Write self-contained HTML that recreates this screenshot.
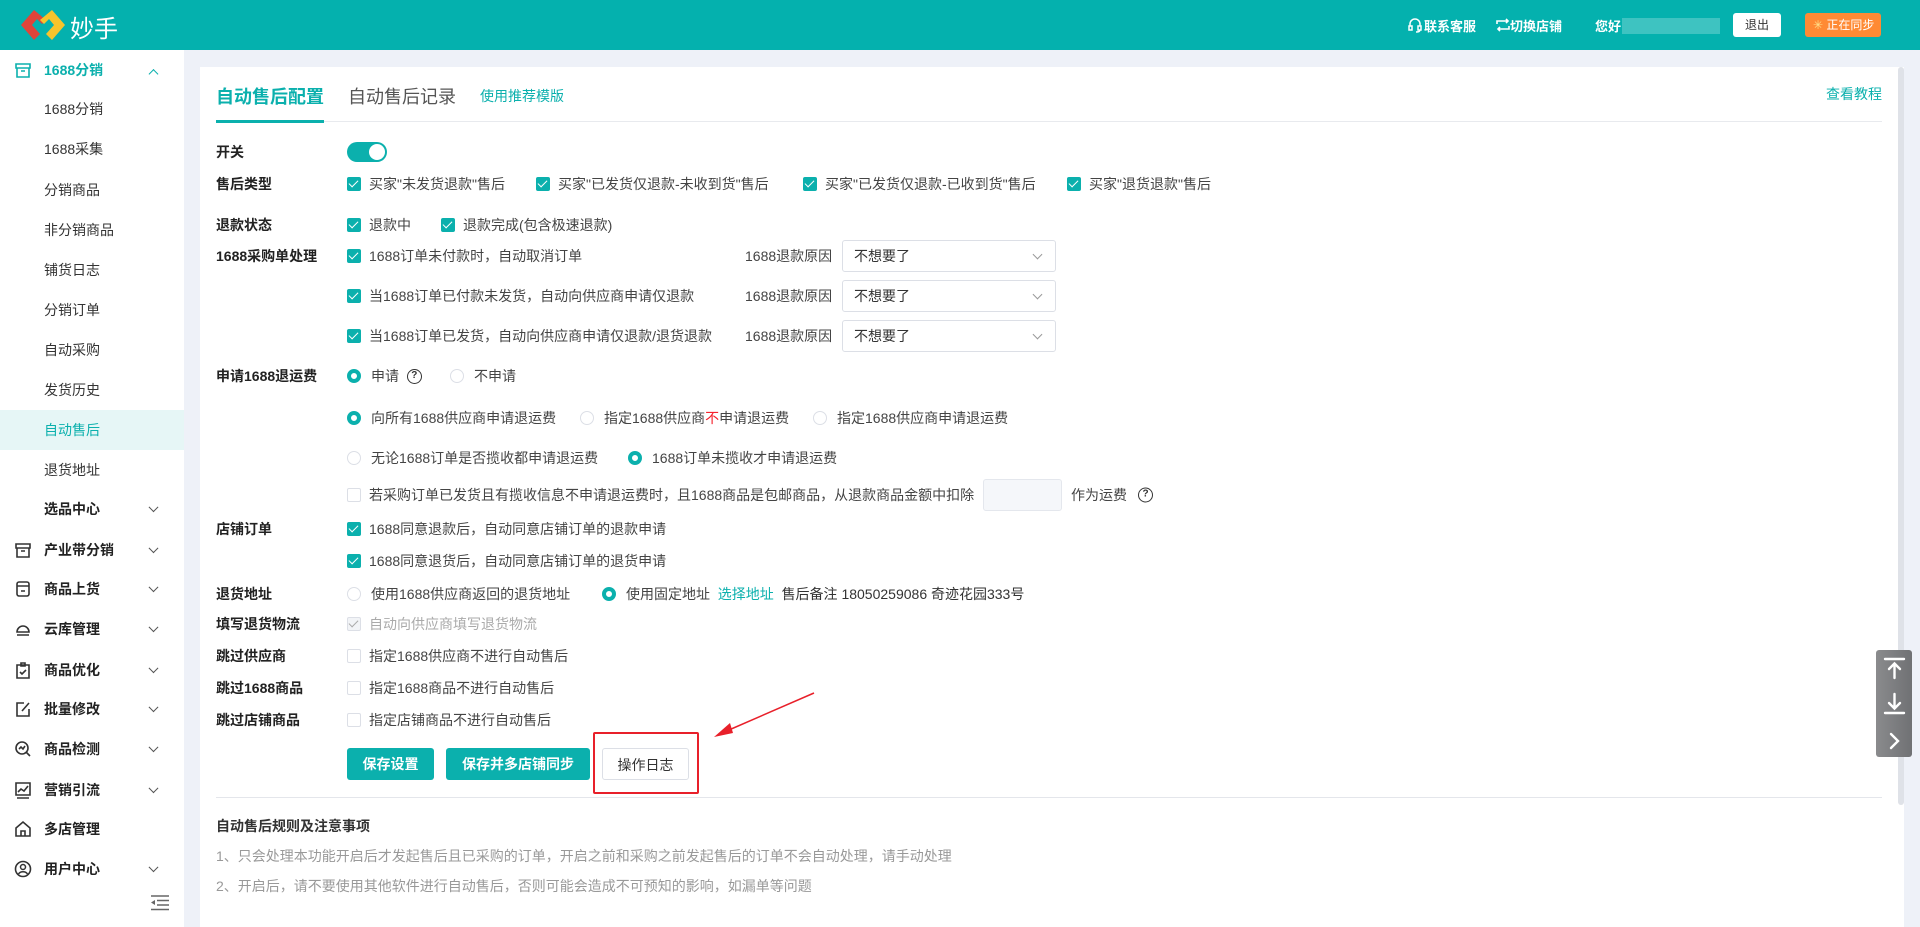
<!DOCTYPE html>
<html><head><meta charset="utf-8"><style>
*{margin:0;padding:0;box-sizing:border-box}
body{width:1920px;height:927px;overflow:hidden;background:#eef1f8;font-family:"Liberation Sans","Noto Sans CJK SC",sans-serif;font-size:14px;color:#333;position:relative}
.a{position:absolute;white-space:nowrap}
.hdr{position:absolute;left:0;top:0;width:1920px;height:50px;background:#04b1ae}
.side{position:absolute;left:0;top:50px;width:184px;height:877px;background:#fff}
.si{position:absolute;left:44px;font-size:14px;color:#333;transform:translateY(-50%)}
.sg{position:absolute;left:44px;font-size:14px;color:#222;font-weight:bold;transform:translateY(-50%)}
.ic{position:absolute;left:14px;width:18px;height:18px;transform:translateY(-50%)}
.chev{position:absolute;left:150px;width:7px;height:7px;border-right:1.5px solid #555;border-bottom:1.5px solid #555;transform:translateY(-75%) rotate(45deg)}
.card{position:absolute;left:200px;top:67px;width:1704px;height:860px;background:#fff}
.lbl{position:absolute;left:216px;font-weight:bold;color:#222;transform:translateY(-50%);white-space:nowrap}
.it{position:absolute;transform:translateY(-50%);white-space:nowrap;display:flex;align-items:center;color:#444}
.cb{width:14px;height:14px;border-radius:2px;background:#0bb0ad;margin-right:8px;position:relative;display:inline-block;flex:none}
.cb:after{content:"";position:absolute;left:4px;top:1px;width:4px;height:8px;border-right:1.5px solid #fff;border-bottom:1.5px solid #fff;transform:rotate(45deg)}
.cb.off{background:#fff;border:1px solid #dcdfe6}
.cb.off:after{display:none}
.cb.dis{background:#f2f4f7;border:1px solid #dcdfe6}
.cb.dis:after{border-color:#aaa;left:3px;top:0}
.rd{width:14px;height:14px;border-radius:50%;border:4px solid #0bb0ad;background:#fff;margin-right:10px;display:inline-block;flex:none}
.rd.off{border:1px solid #dcdfe6}
.sel{position:absolute;left:842px;width:214px;height:32px;border:1px solid #dcdfe6;border-radius:3px;transform:translateY(-50%);padding-left:11px;line-height:30px;color:#333}
.sel:after{content:"";position:absolute;right:14px;top:10px;width:6px;height:6px;border-right:1px solid #999;border-bottom:1px solid #999;transform:rotate(45deg)}
.rs{position:absolute;left:745px;transform:translateY(-50%);color:#444}
.q{display:inline-block;width:15px;height:15px;border:1.5px solid #333;border-radius:50%;font-size:10px;line-height:12px;text-align:center;font-weight:bold;color:#333}
.btn{position:absolute;top:748px;height:32px;line-height:32px;border-radius:3px;text-align:center;font-weight:bold;color:#fff;background:#0bb0ad}
</style></head><body>
<div class="hdr">
 <svg class="a" style="left:18px;top:7px" width="50" height="36" viewBox="0 0 50 36">
  <path d="M16 3 L3 18 L16 33 L22 27 L14 18 L19 12 L24 17 L28 13 Z" fill="#e0443a"/>
  <path d="M34 3 L47 18 L34 33 L28 27 L36 18 L31 12 L26 17 L22 13 Z" fill="#f7c42c"/>
 </svg>
 <div class="a" style="left:70px;top:9px;font-size:24px;color:#fff">妙手</div>
 <svg class="a" style="left:1408px;top:17px" width="14" height="16" viewBox="0 0 14 16"><path d="M2 9 V7 a5 5 0 0 1 10 0 V9 M1 9h3v4H1z M10 9h3v4h-3z M12 13 q0 2 -4 2" stroke="#fff" stroke-width="1.5" fill="none"/></svg>
 <div class="a" style="left:1424px;top:16px;color:#fff;font-weight:bold;font-size:13px">联系客服</div>
 <svg class="a" style="left:1496px;top:18px" width="14" height="14" viewBox="0 0 14 14"><path d="M1 6 V3 H12 M10 1 L12 3 L10 5 M13 8 V11 H2 M4 13 L2 11 L4 9" stroke="#fff" stroke-width="1.6" fill="none"/></svg>
 <div class="a" style="left:1510px;top:16px;color:#fff;font-weight:bold;font-size:13px">切换店铺</div>
 <div class="a" style="left:1595px;top:16px;color:#fff;font-weight:bold;font-size:13px">您好</div>
 <div class="a" style="left:1622px;top:18px;width:98px;height:16px;background:#4ec8c5;opacity:.8"></div>
 <div class="a" style="left:1733px;top:13px;width:48px;height:24px;background:#fff;border-radius:3px;text-align:center;line-height:24px;font-size:12px;color:#333">退出</div>
 <div class="a" style="left:1805px;top:13px;width:76px;height:24px;background:#ff8a34;border-radius:3px;line-height:24px;font-size:12px;color:#fff;padding-left:8px"><span style="color:#ffe08a">✳</span> 正在同步</div>
</div>
<div class="side">
 <svg class="ic" style="top:20px" viewBox="0 0 18 18"><path d="M2 3h14v4H2z M3 7v9h12V7 M7 10h4" stroke="#0bb0ad" stroke-width="1.6" fill="none"/></svg>
 <div class="sg" style="top:20px;color:#0bb0ad">1688分销</div>
 <div class="chev" style="top:24px;transform:translateY(-50%) rotate(225deg);border-color:#0bb0ad"></div>
 <div class="si" style="top:59px">1688分销</div>
 <div class="si" style="top:99px">1688采集</div>
 <div class="si" style="top:140px">分销商品</div>
 <div class="si" style="top:180px">非分销商品</div>
 <div class="si" style="top:220px">铺货日志</div>
 <div class="si" style="top:260px">分销订单</div>
 <div class="si" style="top:300px">自动采购</div>
 <div class="si" style="top:340px">发货历史</div>
 <div class="a" style="left:0;top:360px;width:184px;height:40px;background:#e6f6f6"></div>
 <div class="si" style="top:380px;color:#0bb0ad">自动售后</div>
 <div class="si" style="top:420px">退货地址</div>
 <div class="sg" style="top:459px">选品中心</div><div class="chev" style="top:459px"></div>
 <div class="sg" style="top:500px">产业带分销</div><div class="chev" style="top:500px"></div>
 <svg class="ic" style="top:500px" viewBox="0 0 18 18"><path d="M2 3h14v4H2z M3 7v9h12V7 M7 10h4" stroke="#333" stroke-width="1.6" fill="none"/></svg>
 <div class="sg" style="top:539px">商品上货</div><div class="chev" style="top:539px"></div>
 <svg class="ic" style="top:539px" viewBox="0 0 18 18"><rect x="3" y="2" width="12" height="14" rx="2" stroke="#333" stroke-width="1.6" fill="none"/><path d="M3 6h12 M7 11h4" stroke="#333" stroke-width="1.6"/></svg>
 <div class="sg" style="top:579px">云库管理</div><div class="chev" style="top:579px"></div>
 <svg class="ic" style="top:579px" viewBox="0 0 18 18"><path d="M3 12 a6 6 0 0 1 12 0z M3 15h12" stroke="#333" stroke-width="1.6" fill="none"/></svg>
 <div class="sg" style="top:620px">商品优化</div><div class="chev" style="top:620px"></div>
 <svg class="ic" style="top:620px" viewBox="0 0 18 18"><path d="M3 4h12v13H3z M7 2h4v3H7z M6 11l2 2 4-4" stroke="#333" stroke-width="1.6" fill="none"/></svg>
 <div class="sg" style="top:659px">批量修改</div><div class="chev" style="top:659px"></div>
 <svg class="ic" style="top:659px" viewBox="0 0 18 18"><path d="M10 3H3v13h12V9 M8 11l7-8" stroke="#333" stroke-width="1.6" fill="none"/></svg>
 <div class="sg" style="top:699px">商品检测</div><div class="chev" style="top:699px"></div>
 <svg class="ic" style="top:699px" viewBox="0 0 18 18"><circle cx="8" cy="8" r="6" stroke="#333" stroke-width="1.6" fill="none"/><path d="M12 12l4 4 M5 9l2-2 2 2 2-3" stroke="#333" stroke-width="1.6" fill="none"/></svg>
 <div class="sg" style="top:740px">营销引流</div><div class="chev" style="top:740px"></div>
 <svg class="ic" style="top:740px" viewBox="0 0 18 18"><path d="M2 2h14v12H2z M3 17h12 M4 11l3-3 3 2 4-5" stroke="#333" stroke-width="1.6" fill="none"/></svg>
 <div class="sg" style="top:779px">多店管理</div>
 <svg class="ic" style="top:779px" viewBox="0 0 18 18"><path d="M2 8l7-6 7 6v8H2z M7 16v-5h4v5" stroke="#333" stroke-width="1.6" fill="none"/></svg>
 <div class="sg" style="top:819px">用户中心</div><div class="chev" style="top:819px"></div>
 <svg class="ic" style="top:819px" viewBox="0 0 18 18"><circle cx="9" cy="9" r="7.5" stroke="#333" stroke-width="1.6" fill="none"/><circle cx="9" cy="7" r="2.5" stroke="#333" stroke-width="1.5" fill="none"/><path d="M4.5 14a5 4 0 0 1 9 0" stroke="#333" stroke-width="1.5" fill="none"/></svg>
 <svg class="a" style="left:150px;top:845px" width="20" height="16" viewBox="0 0 20 16"><path d="M1 1h18 M7 5.5h12 M7 10h12 M1 14.5h18" stroke="#666" stroke-width="1.6"/><path d="M5 5v5l-4-2.5z" fill="#666"/></svg>
</div>
<div class="card"></div>
<div class="a" style="left:216px;top:83px;font-size:18px;font-weight:bold;color:#0bb0ad">自动售后配置</div>
<div class="a" style="left:348px;top:83px;font-size:18px;color:#555">自动售后记录</div>
<div class="a" style="left:480px;top:86px;font-size:14px;color:#0bb0ad">使用推荐模版</div>
<div class="a" style="left:1826px;top:84px;font-size:14px;color:#0bb0ad">查看教程</div>
<div class="a" style="left:216px;top:121px;width:1666px;height:1px;background:#e8eaee"></div>
<div class="a" style="left:216px;top:120px;width:108px;height:3px;background:#0bb0ad"></div>
<div class="a" style="left:1898px;top:67px;width:6px;height:738px;background:#dfe2e8;border-radius:3px"></div>

<div class="lbl" style="top:152px">开关</div>
<div class="a" style="left:347px;top:142px;width:40px;height:20px;border-radius:10px;background:#0bb0ad"><div style="position:absolute;right:2px;top:2px;width:16px;height:16px;border-radius:50%;background:#fff"></div></div>

<div class="lbl" style="top:184px">售后类型</div>
<div class="it" style="left:347px;top:184px"><i class="cb"></i>买家"未发货退款"售后</div>
<div class="it" style="left:536px;top:184px"><i class="cb"></i>买家"已发货仅退款-未收到货"售后</div>
<div class="it" style="left:803px;top:184px"><i class="cb"></i>买家"已发货仅退款-已收到货"售后</div>
<div class="it" style="left:1067px;top:184px"><i class="cb"></i>买家"退货退款"售后</div>

<div class="lbl" style="top:225px">退款状态</div>
<div class="it" style="left:347px;top:225px"><i class="cb"></i>退款中</div>
<div class="it" style="left:441px;top:225px"><i class="cb"></i>退款完成(包含极速退款)</div>

<div class="lbl" style="top:256px">1688采购单处理</div>
<div class="it" style="left:347px;top:256px"><i class="cb"></i>1688订单未付款时，自动取消订单</div>
<div class="it" style="left:347px;top:296px"><i class="cb"></i>当1688订单已付款未发货，自动向供应商申请仅退款</div>
<div class="it" style="left:347px;top:336px"><i class="cb"></i>当1688订单已发货，自动向供应商申请仅退款/退货退款</div>
<div class="rs" style="top:256px">1688退款原因</div><div class="sel" style="top:256px">不想要了</div>
<div class="rs" style="top:296px">1688退款原因</div><div class="sel" style="top:296px">不想要了</div>
<div class="rs" style="top:336px">1688退款原因</div><div class="sel" style="top:336px">不想要了</div>

<div class="lbl" style="top:376px">申请1688退运费</div>
<div class="it" style="left:347px;top:376px"><i class="rd"></i>申请&nbsp;&nbsp;<span class="q">?</span></div>
<div class="it" style="left:450px;top:376px"><i class="rd off"></i>不申请</div>
<div class="it" style="left:347px;top:418px"><i class="rd"></i>向所有1688供应商申请退运费</div>
<div class="it" style="left:580px;top:418px"><i class="rd off"></i>指定1688供应商<span style="color:#f5222d">不</span>申请退运费</div>
<div class="it" style="left:813px;top:418px"><i class="rd off"></i>指定1688供应商申请退运费</div>
<div class="it" style="left:347px;top:458px"><i class="rd off"></i>无论1688订单是否揽收都申请退运费</div>
<div class="it" style="left:628px;top:458px"><i class="rd"></i>1688订单未揽收才申请退运费</div>
<div class="it" style="left:347px;top:495px"><i class="cb off"></i>若采购订单已发货且有揽收信息不申请退运费时，且1688商品是包邮商品，从退款商品金额中扣除</div>
<div class="a" style="left:983px;top:479px;width:79px;height:32px;border:1px solid #e4e7ed;background:#f5f7fa;border-radius:3px"></div>
<div class="it" style="left:1071px;top:495px">作为运费</div>
<div class="it" style="left:1138px;top:495px"><span class="q">?</span></div>

<div class="lbl" style="top:529px">店铺订单</div>
<div class="it" style="left:347px;top:529px"><i class="cb"></i>1688同意退款后，自动同意店铺订单的退款申请</div>
<div class="it" style="left:347px;top:561px"><i class="cb"></i>1688同意退货后，自动同意店铺订单的退货申请</div>

<div class="lbl" style="top:594px">退货地址</div>
<div class="it" style="left:347px;top:594px"><i class="rd off"></i>使用1688供应商返回的退货地址</div>
<div class="it" style="left:602px;top:594px"><i class="rd"></i>使用固定地址&nbsp;&nbsp;<span style="color:#0bb0ad">选择地址</span>&nbsp;&nbsp;<span style="color:#333">售后备注 18050259086 奇迹花园333号</span></div>

<div class="lbl" style="top:624px">填写退货物流</div>
<div class="it" style="left:347px;top:624px;color:#aaa"><i class="cb dis"></i>自动向供应商填写退货物流</div>
<div class="lbl" style="top:656px">跳过供应商</div>
<div class="it" style="left:347px;top:656px"><i class="cb off"></i>指定1688供应商不进行自动售后</div>
<div class="lbl" style="top:688px">跳过1688商品</div>
<div class="it" style="left:347px;top:688px"><i class="cb off"></i>指定1688商品不进行自动售后</div>
<div class="lbl" style="top:720px">跳过店铺商品</div>
<div class="it" style="left:347px;top:720px"><i class="cb off"></i>指定店铺商品不进行自动售后</div>

<div class="btn" style="left:347px;width:87px">保存设置</div>
<div class="btn" style="left:446px;width:144px">保存并多店铺同步</div>
<div class="btn" style="left:602px;width:87px;background:#fff;border:1px solid #dcdfe6;color:#333;font-weight:normal">操作日志</div>
<div class="a" style="left:593px;top:732px;width:106px;height:62px;border:2px solid #e8202a;border-radius:2px"></div>
<svg class="a" style="left:700px;top:685px" width="130" height="60" viewBox="0 0 130 60"><path d="M114 8 L22 48" stroke="#e8202a" stroke-width="1.5"/><path d="M14 52 L30 38 L33 48 Z" fill="#e8202a"/></svg>

<div class="a" style="left:216px;top:797px;width:1666px;height:1px;background:#e4e6eb"></div>
<div class="a" style="left:216px;top:816px;font-weight:bold;color:#333">自动售后规则及注意事项</div>
<div class="a" style="left:216px;top:846px;color:#999">1、只会处理本功能开启后才发起售后且已采购的订单，开启之前和采购之前发起售后的订单不会自动处理，请手动处理</div>
<div class="a" style="left:216px;top:876px;color:#999">2、开启后，请不要使用其他软件进行自动售后，否则可能会造成不可预知的影响，如漏单等问题</div>

<div class="a" style="left:1876px;top:650px;width:36px;height:107px;border-radius:3px;background:linear-gradient(90deg,#8a8b8d,#707174)"></div>
<svg class="a" style="left:1876px;top:650px" width="36" height="107" viewBox="0 0 36 107"><g stroke="#fff" stroke-width="2.4" fill="none" stroke-linecap="round"><path d="M9 9h19 M18.5 28V14 M13 19l5.5-5.5 5.5 5.5"/><path d="M9 63h19 M18.5 44v14 M13 53l5.5 5.5 5.5-5.5"/><path d="M15 84l7 7-7 7"/></g></svg>
</body></html>
